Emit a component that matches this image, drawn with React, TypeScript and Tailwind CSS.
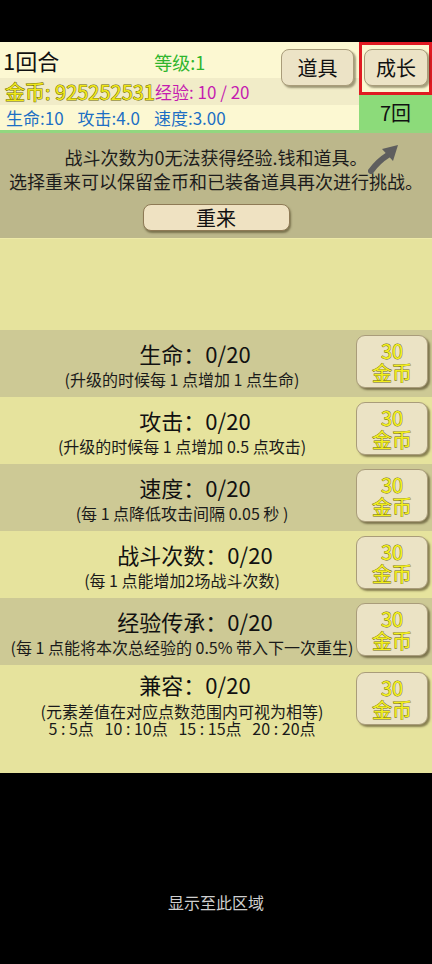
import React from 'react';

// Growth / upgrade screen of the idle battle game
const FONT = "font-['Noto_Sans_CJK_SC','Noto_Sans',sans-serif]";

interface Upgrade {
  title: string;
  desc: string[];
  dark?: boolean;
  tall?: boolean;
}

const upgrades: Upgrade[] = [
  { title: '生命：0/20', desc: ['(升级的时候每 1 点增加 1 点生命)'], dark: true },
  { title: '攻击：0/20', desc: ['(升级的时候每 1 点增加 0.5 点攻击)'] },
  { title: '速度：0/20', desc: ['(每 1 点降低攻击间隔 0.05 秒 )'], dark: true },
  { title: '战斗次数：0/20', desc: ['(每 1 点能增加2场战斗次数)'] },
  { title: '经验传承：0/20', desc: ['(每 1 点能将本次总经验的 0.5% 带入下一次重生)'], dark: true },
  {
    title: '兼容：0/20',
    desc: ['(元素差值在对应点数范围内可视为相等)', '5 : 5点   10 : 10点   15 : 15点   20 : 20点'],
    tall: true,
  },
];

const CoinButton: React.FC = () => (
  <button
    type="button"
    className="flex h-[53px] w-[72px] flex-col items-center justify-center rounded-[9px] border border-[#a99c7a] bg-[#ebe3c5] text-[20px] leading-[22px] text-[#f4ef1c] [-webkit-text-stroke:0.8px_#6e6a10] [paint-order:stroke_fill] [box-shadow:2px_2px_2px_rgba(60,50,20,0.55)]"
  >
    <span>30</span>
    <span>金币</span>
  </button>
);

const UpgradeRow: React.FC<{ item: Upgrade }> = ({ item }) => (
  <div
    className={`flex items-start pr-[4px] ${item.tall ? 'h-[108px] pt-[7px]' : 'h-[67px] pt-[5px]'} ${
      item.dark ? 'bg-[#cdc995]' : 'bg-[#e6e39d]'
    }`}
  >
    <div className={`flex-1 ${item.tall ? '-mt-[3px]' : 'pt-[3px]'}`}>
      <div className="pl-[34px] text-center text-[22px] leading-[30px] text-[#111]">{item.title}</div>
      <div
        className={`pl-[8px] text-center text-[16px] text-[#1a1a1a] ${
          item.tall ? 'mt-[4px] leading-[17px]' : 'mt-[1px] leading-[20px]'
        }`}
      >
        {item.desc.map((line) => (
          <div key={line} className="whitespace-pre">
            {line}
          </div>
        ))}
      </div>
    </div>
    <CoinButton />
  </div>
);

const RetryArrow: React.FC = () => (
  <svg width="32" height="30" viewBox="0 0 32 30" className="absolute left-[368px] top-[11px]">
    <path d="M3 27 C8 20 12 16 20 11" fill="none" stroke="#5e5e5e" strokeWidth="6" strokeLinecap="round" />
    <path d="M14 5 L30 1 L25 17 Z" fill="#5e5e5e" />
  </svg>
);

const App: React.FC = () => {
  return (
    <div className={`flex min-h-[964px] w-[432px] flex-col bg-black ${FONT}`}>
      <div className="h-[42px]" />

      {/* Status header */}
      <div className="relative flex">
        <div className="w-[359px] bg-[#fcf8d2]">
          <div className="flex h-[36px] items-center">
            <span className="pl-[3px] text-[22px] leading-none text-[#111]">1回合</span>
            <span className="ml-[95px] mt-[4px] text-[18px] leading-none text-[#2fb52c]">等级:1</span>
          </div>
          <div className="flex h-[27px] items-center bg-[#f1ecc8]">
            <span className="pl-[5px] text-[20px] leading-none text-[#efe71a] [-webkit-text-stroke:1px_#6d6700] [paint-order:stroke_fill]">
              金币: 925252531
            </span>
            <span className="text-[17px] leading-none text-[#c51cb0]">经验: 10 / 20</span>
          </div>
          <div className="flex h-[25px] items-center gap-[14px] pl-[6px] text-[17px] leading-none text-[#1d6fc4]">
            <span>生命:10</span>
            <span>攻击:4.0</span>
            <span>速度:3.00</span>
          </div>
        </div>
        <div className="flex w-[73px] flex-col">
          <div className="h-[53px] border-[3px] border-[#e01a22] bg-[#fcf8d2] pl-[2px] pt-[4px]">
            <button
              type="button"
              className="h-[37px] w-[64px] rounded-[8px] border border-[#a99c7a] bg-[#ece3c6] text-[20px] leading-none text-[#111] [box-shadow:2px_2px_2px_rgba(60,50,20,0.45)]"
            >
              成长
            </button>
          </div>
          <div className="flex flex-1 items-center justify-center bg-[#8cdb7a] text-[20px] leading-none text-[#111]">
            7回
          </div>
        </div>
        <button
          type="button"
          className="absolute left-[281px] top-[7px] h-[37px] w-[73px] rounded-[8px] border border-[#a99c7a] bg-[#ece3c6] text-[20px] leading-none text-[#111] [box-shadow:2px_2px_2px_rgba(60,50,20,0.45)]"
        >
          道具
        </button>
      </div>
      <div className="h-[3px] bg-[#92d77f]" />

      {/* Battle count notice */}
      <div className="relative flex h-[105px] flex-col items-center bg-[#bcb78b] pt-[12px]">
        <RetryArrow />
        <p className="text-[18px] leading-[24px] text-[#1c1c1c]">战斗次数为0无法获得经验.钱和道具。</p>
        <p className="text-[18px] leading-[24px] text-[#1c1c1c]">选择重来可以保留金币和已装备道具再次进行挑战。</p>
        <button
          type="button"
          className="mt-[11px] h-[27px] w-[147px] rounded-[8px] border border-[#8e7a55] bg-[#efe2c2] text-[20px] leading-none text-[#111] [box-shadow:1px_2px_2px_rgba(60,50,20,0.5)]"
        >
          重来
        </button>
      </div>

      <div className="h-[92px] border-t border-[#eeeaa8] bg-[#e6e39d]" />

      {/* Upgrade list */}
      <div>
        {upgrades.map((item) => (
          <UpgradeRow key={item.title} item={item} />
        ))}
      </div>

      <div className="flex flex-1 items-start justify-center pt-[121px]">
        <span className="text-[16px] leading-none text-[#cfcfcf]">显示至此区域</span>
      </div>
    </div>
  );
};

export default App;
